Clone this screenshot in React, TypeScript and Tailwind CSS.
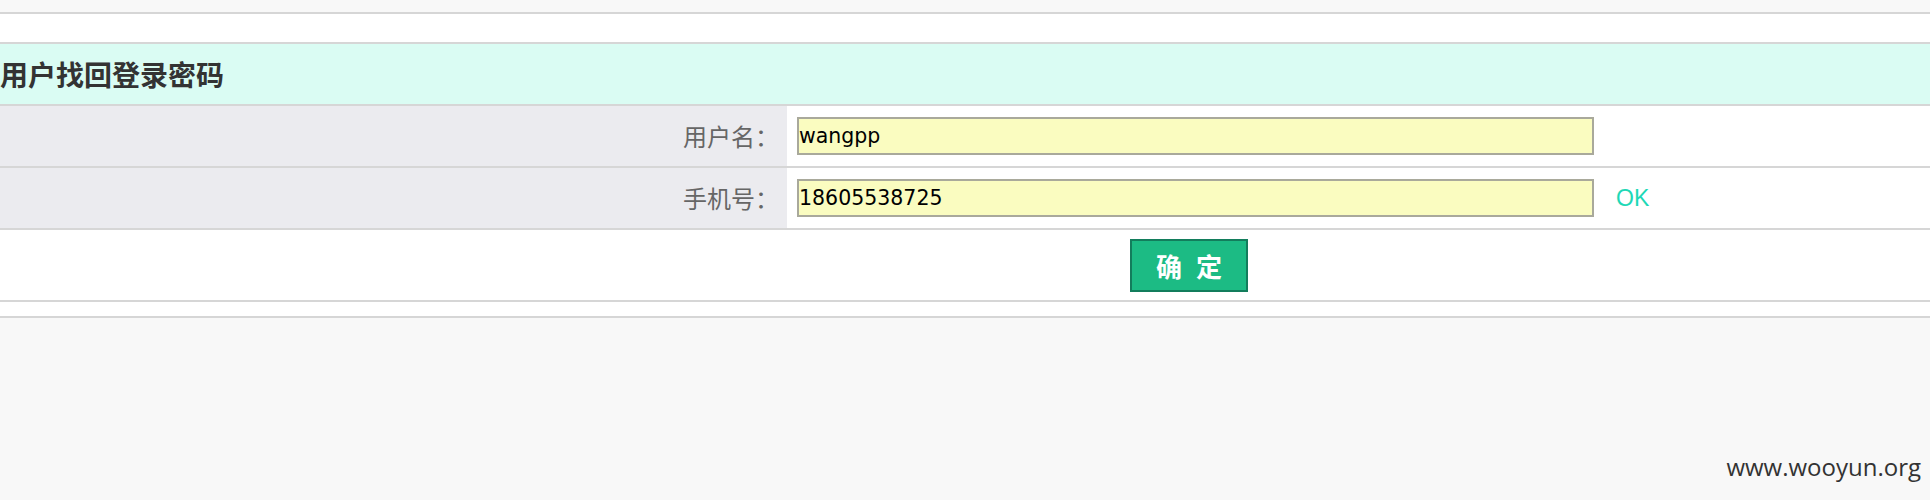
import React from "react";

const cjk = "font-['Noto_Sans_CJK_SC',sans-serif]";

interface FieldRowProps {
  label: string;
  value: string;
  note?: string;
}

function FieldRow({ label, value, note }: FieldRowProps) {
  return (
    <div className="grid grid-cols-[787px_1fr] h-[62px] border-t-2 border-[#d6d6d6]">
      <div className={`bg-[#ebebef] flex items-center justify-end pr-[8px] text-[24px] text-[#666] ${cjk}`}>
        {label}
      </div>
      <div className="bg-white flex items-center pl-[10px]">
        <input
          readOnly
          defaultValue={value}
          className="w-[797px] h-[38px] border-2 border-[#a9a99b] bg-[#fafcc0] px-0 text-[20.5px] text-black outline-none font-['DejaVu_Sans',sans-serif]"
        />
        {note && (
          <span className="ml-[22px] text-[23px] text-[#1ed8b6] font-['Liberation_Sans',sans-serif]">
            {note}
          </span>
        )}
      </div>
    </div>
  );
}

export default function App() {
  return (
    <div className="relative min-h-[500px] bg-[#f8f8f8]">
      <div className="h-3" />
      <div className="h-8 bg-white border-y-2 border-[#d6d6d6]" />

      {/* Header */}
      <div className="h-[60px] bg-[#dafcf3] flex items-center">
        <h1 className={`text-[28px] font-bold text-[#333] leading-none ${cjk}`}>用户找回登录密码</h1>
      </div>

      {/* Form */}
      <FieldRow label="用户名：" value="wangpp" />
      <FieldRow label="手机号：" value="18605538725" note="OK" />

      <div className="h-[72px] bg-white border-t-2 border-[#d6d6d6] flex items-center pl-[1130px]">
        <button
          type="button"
          className={`w-[118px] h-[53px] bg-[#1cbb84] border-2 border-[#137d5c] text-white font-bold text-[26px] flex items-center justify-center gap-[14px] ${cjk}`}
        >
          <span>确</span>
          <span>定</span>
        </button>
      </div>

      <div className="h-4 bg-white border-t-2 border-[#d6d6d6]" />
      <div className="border-t-2 border-[#d6d6d6]" />

      <div className="absolute right-[9px] bottom-[15px] text-[24px] text-[#333] font-['Open_Sans',sans-serif]">
        www.wooyun.org
      </div>
    </div>
  );
}
